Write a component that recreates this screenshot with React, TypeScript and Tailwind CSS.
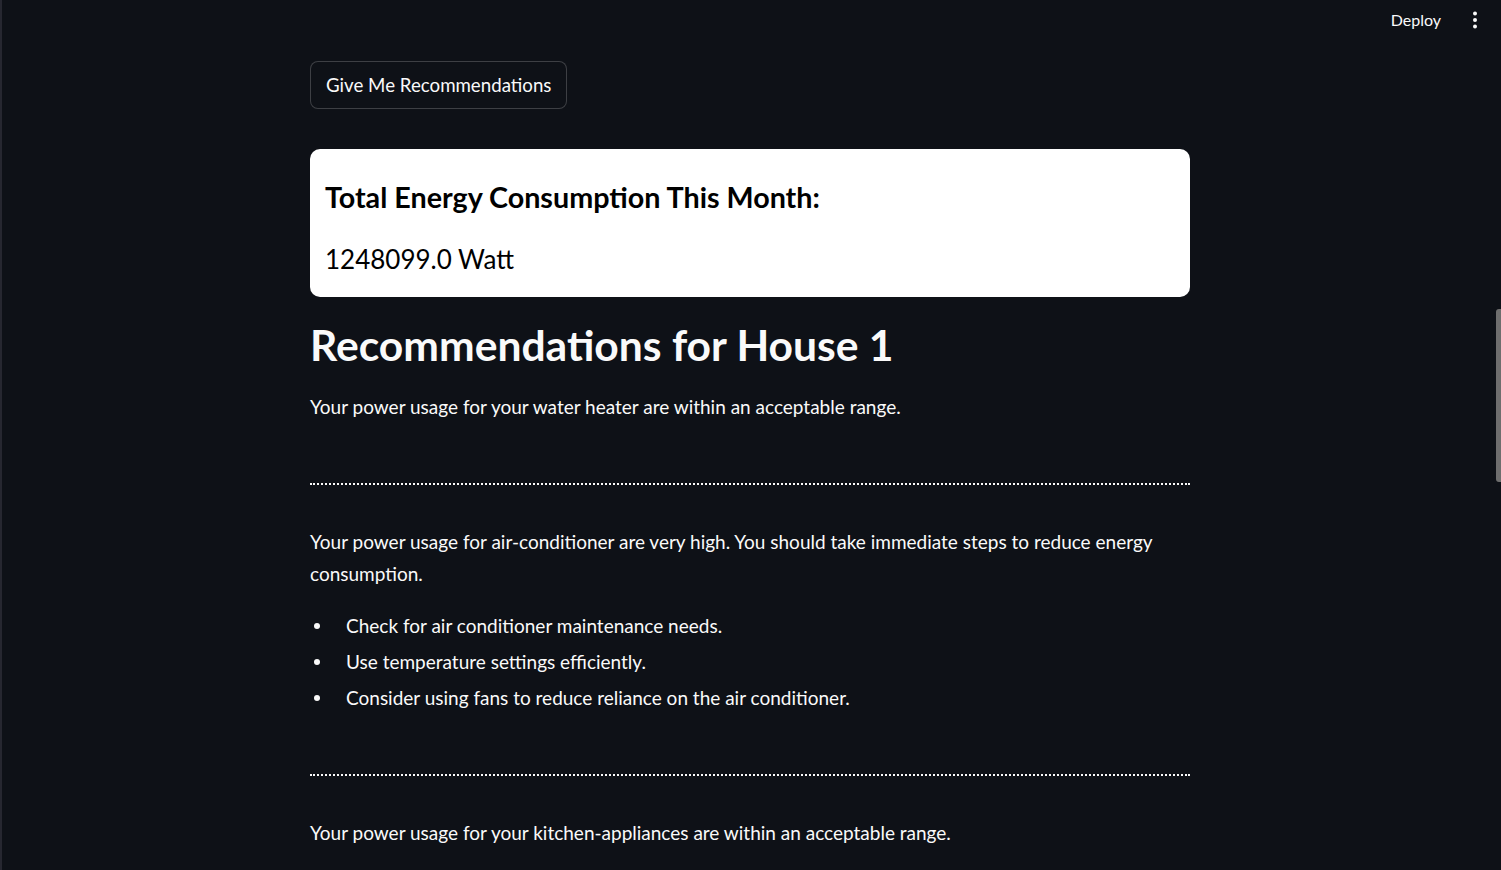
import { useState } from "react";

const tips = [
  "Check for air conditioner maintenance needs.",
  "Use temperature settings efficiently.",
  "Consider using fans to reduce reliance on the air conditioner.",
];

function Divider({ className = "" }: { className?: string }) {
  return <div className={`border-t-2 border-dotted border-[#fafafa] ${className}`} />;
}

export default function App() {
  const [clicked, setClicked] = useState(false);

  return (
    <div className="relative flex h-[870px] w-full overflow-hidden bg-[#0e1117] text-[#fafafa] font-['Lato','Liberation_Sans',sans-serif]">
      <div className="w-[2px] shrink-0 bg-[#262730]" />

      <div className="flex flex-1 flex-col">
        {/* top bar */}
        <div className="flex h-[39px] items-center justify-end pr-[20px]">
          <button className="text-[16px] leading-none text-[#fafafa]">Deploy</button>
          <button className="ml-[28px] text-[#fafafa]" aria-label="Main menu">
            <svg width="12" height="22" viewBox="0 0 12 22" fill="currentColor">
              <circle cx="6" cy="4.5" r="2" />
              <circle cx="6" cy="11" r="2" />
              <circle cx="6" cy="17.5" r="2" />
            </svg>
          </button>
        </div>

        <main className="ml-[308px] w-[880px]">
          <button
            onClick={() => setClicked(!clicked)}
            className="mt-[22px] flex h-[48px] items-center rounded-[8px] border border-[#fafafa]/20 bg-[#0e1117] px-[15px] text-[18.7px] text-[#fafafa] hover:border-[#ff4b4b]"
          >
            Give Me Recommendations
          </button>

          <div className="mt-[40px] rounded-[10px] bg-white px-[15px] pt-[28px] pb-[18px] text-black">
            <h3 className="text-[28.7px] font-bold leading-[40px]">Total Energy Consumption This Month:</h3>
            <p className="mt-[22px] text-[26px] leading-[40px]">1248099.0 Watt</p>
          </div>

          <h2 className="mt-[20px] text-[42.6px] font-bold leading-[56px]">Recommendations for House 1</h2>

          <p className="mt-[18px] text-[19px] leading-[32px]">
            Your power usage for your water heater are within an acceptable range.
          </p>

          <Divider className="mt-[60px]" />

          <p className="mt-[41px] text-[19px] leading-[32px]">
            Your power usage for air-conditioner are very high. You should take immediate steps to reduce energy
            consumption.
          </p>

          <ul className="mt-[20px] flex flex-col gap-[4px]">
            {tips.map((t) => (
              <li key={t} className="flex items-center text-[19px] leading-[32px]">
                <span className="ml-[4px] mr-[26px] h-[6px] w-[6px] rounded-full bg-[#fafafa]" />
                {t}
              </li>
            ))}
          </ul>

          <Divider className="mt-[60px]" />

          <p className="mt-[41px] text-[19px] leading-[32px]">
            Your power usage for your kitchen-appliances are within an acceptable range.
          </p>
        </main>
      </div>

      {/* scrollbar thumb */}
      <div className="absolute right-0 top-[309px] h-[173px] w-[5px] rounded-l-[3px] bg-[#6e6e6e]" />
    </div>
  );
}
